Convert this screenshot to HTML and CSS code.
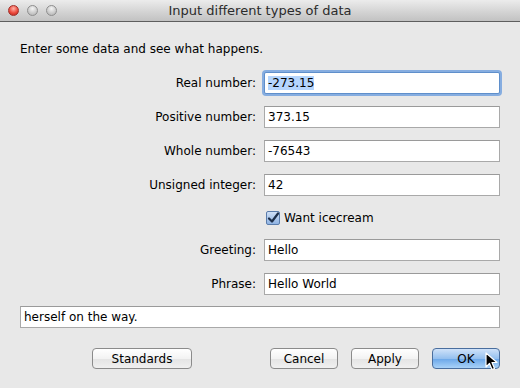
FILE: index.html
```html
<!DOCTYPE html>
<html lang="en">
<head>
  <meta charset="UTF-8">
  <title>Input different types of data</title>
  <link rel="stylesheet" href="styles.css">
</head>
<body>
<div class="window">
  <!-- Title bar -->
  <div class="titlebar">
    <div class="lights">
      <span class="light close"></span>
      <span class="light"></span>
      <span class="light"></span>
    </div>
    <div class="title">Input different types of data</div>
  </div>

  <div class="content">
    <p class="intro">Enter some data and see what happens.</p>

    <div class="form">
      <label class="label">Real number:</label>
      <div class="field focused"><span class="selected">-273.15</span></div>

      <label class="label">Positive number:</label>
      <div class="field">373.15</div>

      <label class="label">Whole number:</label>
      <div class="field">-76543</div>

      <label class="label">Unsigned integer:</label>
      <div class="field">42</div>

      <span></span>
      <div class="check-row">
        <span class="checkbox">
          <svg width="12" height="12" viewBox="0 0 12 12"><path d="M2 6.5 L5 9.5 L11 1.5" fill="none" stroke="#1d2f4a" stroke-width="2.2" stroke-linecap="round" stroke-linejoin="round"/></svg>
        </span>
        Want icecream
      </div>

      <label class="label">Greeting:</label>
      <div class="field">Hello</div>

      <label class="label">Phrase:</label>
      <div class="field">Hello World</div>

      <div class="field wide">herself on the way.</div>
    </div>

    <div class="buttons">
      <button class="btn standards">Standards</button>
      <button class="btn cancel">Cancel</button>
      <button class="btn">Apply</button>
      <button class="btn default">OK</button>
    </div>
  </div>

  <!-- mouse pointer over OK -->
  <svg class="cursor" width="14" height="20" viewBox="0 0 14 20">
    <path d="M1 1 L1 15 L4.5 11.5 L7 17.5 L9.5 16.5 L7 10.5 L12 10.5 Z" fill="#000" stroke="#fff" stroke-width="1.2" stroke-linejoin="round"/>
  </svg>
</div>
</body>
</html>
```

FILE: styles.css
```css
body {
  margin: 0;
  padding: 0;
  font-family: 'DejaVu Sans', sans-serif;
  font-size: 12px;
  color: #000;
  background: #e8e8e8;
}

.window {
  position: relative;
  width: 520px;
  height: 388px;
  background: #e8e8e8;
  overflow: hidden;
}

.titlebar {
  position: relative;
  height: 21px;
  border-bottom: 1px solid #5e5e5e;
  background: linear-gradient(#ececec, #d2d2d2 60%, #c2c2c2);
  display: flex;
  align-items: center;
}

.lights {
  display: flex;
  gap: 8px;
  padding-left: 8px;
}

.light {
  width: 11px;
  height: 11px;
  border-radius: 50%;
  border: 1px solid #8e8e8e;
  box-sizing: border-box;
  background: radial-gradient(circle at 50% 30%, #f4f4f4, #c9c9c9 60%, #b0b0b0);
}

.light.close {
  border-color: #a1302a;
  background: radial-gradient(circle at 50% 30%, #ffb3a8, #ec4b3e 55%, #b3221a);
}

.title {
  position: absolute;
  left: 0;
  right: 0;
  text-align: center;
  font-size: 13px;
  color: #2b2b2b;
}

.content {
  padding: 0 20px;
}

.intro {
  margin: 0;
  padding-top: 19px;
  padding-bottom: 15px;
  line-height: 16px;
}

.form {
  display: grid;
  grid-template-columns: 1fr 236px;
  column-gap: 8px;
  row-gap: 12px;
}

.label {
  text-align: right;
  line-height: 22px;
}

.field {
  height: 22px;
  box-sizing: border-box;
  border: 1px solid #a9a9a9;
  border-top-color: #9a9a9a;
  background: #fff;
  padding: 0 3px;
  line-height: 20px;
  white-space: nowrap;
}

.field.focused {
  border-color: #5f8fcb;
  box-shadow: 0 0 0 2px #86ade0;
  border-radius: 2px;
}

.selected {
  background: #b5d5fd;
}

.field.wide {
  grid-column: 1 / 3;
  margin-top: -1px;
}

.check-row {
  display: flex;
  align-items: center;
  gap: 4px;
  height: 19px;
  padding-left: 2px;
}

.checkbox {
  width: 14px;
  height: 14px;
  box-sizing: border-box;
  border: 1px solid #5a7cab;
  border-radius: 2px;
  background: linear-gradient(#cfe0f6, #8fb3e3);
  display: flex;
  align-items: center;
  justify-content: center;
}

.buttons {
  display: flex;
  gap: 13px;
  margin-top: 20px;
}

.btn {
  height: 21px;
  width: 68px;
  padding: 0;
  font-family: 'DejaVu Sans', sans-serif;
  font-size: 12px;
  color: #000;
  border: 1px solid #8b8b8b;
  border-radius: 4px;
  background: linear-gradient(#ffffff, #f3f3f3 50%, #e4e4e4 51%, #f0f0f0);
}

.btn.standards {
  width: 100px;
  margin-left: 72px;
}

.btn.cancel {
  margin-left: auto;
}

.btn.default {
  border-color: #4a6e9e;
  background: linear-gradient(#cfe2f9, #95c0ef 50%, #6aa6e8 51%, #a9d2f8);
}

.cursor {
  position: absolute;
  left: 485px;
  top: 352px;
}
```
